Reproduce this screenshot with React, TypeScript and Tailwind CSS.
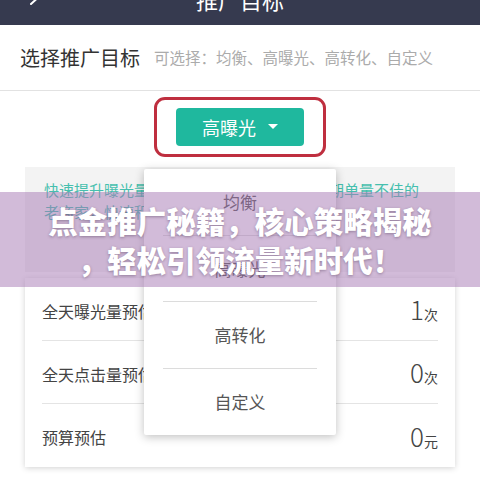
import React from 'react';

const font = { fontFamily: '"Noto Sans CJK SC", "Noto Sans", sans-serif' };

const stats = [
  { label: '全天曝光量预估', value: '1', unit: '次' },
  { label: '全天点击量预估', value: '0', unit: '次' },
  { label: '预算预估', value: '0', unit: '元' },
];

const options = ['均衡', '高曝光', '高转化', '自定义'];

export default function App() {
  return (
    <div className="relative w-[480px] h-[480px] overflow-hidden bg-white" style={font}>
      {/* Top bar */}
      <header className="relative h-[25px] bg-[#363a4f] overflow-hidden">
        <svg className="absolute left-[28px] top-[-6px]" width="18" height="20" viewBox="0 0 18 20">
          <path d="M14 0 L3 10" stroke="#fff" strokeWidth="2" fill="none" strokeLinecap="round" />
        </svg>
        <div className="absolute left-0 right-0 top-[-15px] text-center text-[22px] text-white leading-[28px]">
          推广目标
        </div>
      </header>

      {/* Target title */}
      <div className="h-[66px] flex items-center px-[20px] border-b border-[#e2e2e2]">
        <span className="text-[20px] text-[#333]">选择推广目标</span>
        <span className="ml-[14px] text-[15.5px] text-[#ababab]">可选择：均衡、高曝光、高转化、自定义</span>
      </div>

      {/* Selector */}
      <div className="mt-[6px] mx-auto w-[172px] h-[60px] rounded-[11px] border-[3px] border-[#bf2f3f] flex items-center justify-center">
        <div className="w-[128px] h-[38px] rounded-[4px] bg-[#1fb89e] flex items-center justify-center gap-[12px]">
          <span className="text-[18px] text-white">高曝光</span>
          <svg width="10" height="6" viewBox="0 0 10 6">
            <path d="M0 0 H10 L5 5 Z" fill="#fff" />
          </svg>
        </div>
      </div>

      {/* Description */}
      <div className="mt-[10px] mx-[25px] h-[105px] bg-[#f3f3f3] pt-[12px] px-[19px] text-[15px] leading-[22px] text-[#46bfae]">
        <div className="whitespace-nowrap">快速提升曝光量，适用于新上线店铺或者近期单量不佳的</div>
        <div className="whitespace-nowrap">老商家，快速积累店铺流量</div>
      </div>

      {/* Estimates */}
      <div className="mt-[6px] mx-[25px] bg-white shadow-[0_1px_6px_rgba(0,0,0,0.18)] px-[17px]">
        {stats.map((s, i) => (
          <div
            key={s.label}
            className={`h-[63px] flex items-center justify-between ${i < stats.length - 1 ? 'border-b border-[#e4e4e4]' : ''}`}
          >
            <span className="text-[16px] text-[#444] pt-[3px]">{s.label}</span>
            <span className="flex items-baseline text-[#444]">
              <span className="text-[26px] font-light leading-none">{s.value}</span>
              <span className="text-[14px] leading-none">{s.unit}</span>
            </span>
          </div>
        ))}
      </div>

      {/* Dropdown menu */}
      <div className="absolute left-[144px] top-[169px] w-[192px] h-[266px] bg-white rounded-[2px] shadow-[0_2px_10px_rgba(0,0,0,0.25)] flex flex-col">
        {options.map((o, i) => (
          <div key={o} className="flex-1 flex flex-col">
            <div className="flex-1 flex items-center justify-center text-[17px] text-[#555]">{o}</div>
            {i < options.length - 1 && <div className="mx-[19px] h-px bg-[#dcdcdc]" />}
          </div>
        ))}
      </div>

      {/* Banner overlay */}
      <div className="absolute left-0 right-0 top-[192px] h-[95px] bg-[rgba(165,120,180,0.5)] flex flex-col items-center justify-center">
        <div className="text-[29.5px] font-black text-white leading-[39px] [text-shadow:0_1px_3px_rgba(60,40,70,0.4)]">
          点金推广秘籍，核心策略揭秘
        </div>
        <div className="text-[29.5px] font-black text-white leading-[39px] [text-shadow:0_1px_3px_rgba(60,40,70,0.4)]">
          ，轻松引领流量新时代！
        </div>
      </div>
    </div>
  );
}
